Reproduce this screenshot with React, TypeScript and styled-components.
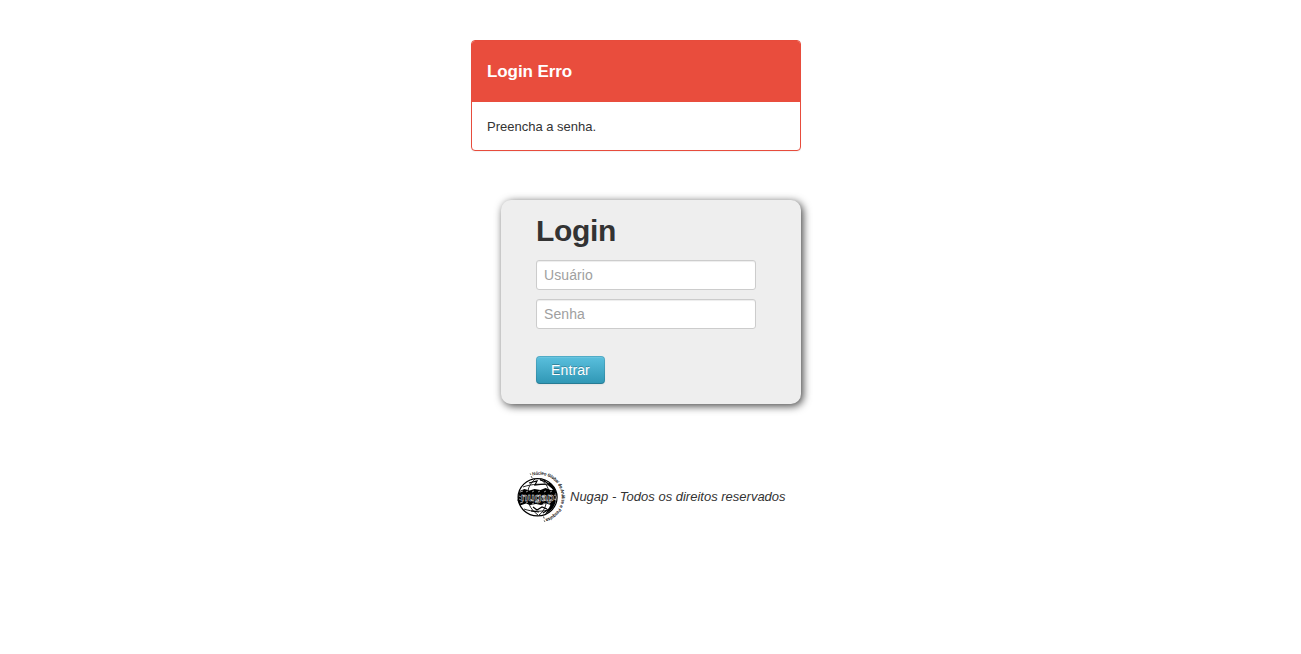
import React from "react";
import styled, { createGlobalStyle } from "styled-components";

const GlobalStyle = createGlobalStyle`
  * { box-sizing: border-box; }
  body {
    margin: 0;
    background: #fff;
    color: #333;
    font: 13px/18px "Liberation Sans", Arial, sans-serif;
  }
`;

const Page = styled.main`
  width: 360px;
  margin-left: 471px;
  padding-top: 40px;
`;

const Alert = styled.section`
  width: 330px;
  height: 111px;
  border: 1px solid #e74c3c;
  border-radius: 4px;
  background: #fff;
  overflow: hidden;
  box-shadow: 0 1px 1px rgba(0, 0, 0, 0.05);
`;

const AlertTitle = styled.h3`
  margin: 0;
  height: 61px;
  padding: 0 15px;
  background: #e94d3d;
  color: #fff;
  font-size: 17px;
  line-height: 62px;
  letter-spacing: -0.08px;
`;

const AlertBody = styled.p`
  margin: 0;
  padding: 16px 15px 14px;
`;

const LoginForm = styled.form`
  display: flex;
  flex-direction: column;
  align-items: flex-start;
  width: 300px;
  height: 204px;
  margin: 49px 0 0 30px;
  padding: 13px 35px 0;
  border-radius: 10px;
  background: #eee;
  box-shadow: 2px 2px 8px rgba(0, 0, 0, 0.75);
`;

const Heading = styled.h1`
  margin: 0 0 11px;
  font-size: 30px;
  line-height: 36px;
  letter-spacing: -0.35px;
`;

const Field = styled.input`
  width: 220px;
  height: 30px;
  margin: 0 0 9px;
  padding: 4px 7px;
  border: 1px solid #ccc;
  border-radius: 3px;
  background: #fff;
  box-shadow: inset 0 1px 1px rgba(0, 0, 0, 0.075);
  color: #555;
  font: 14px/20px "Liberation Sans", Arial, sans-serif;
  letter-spacing: 0.1px;
  &::placeholder { color: #a0a0a0; opacity: 1; }
`;

const Submit = styled.button`
  width: 69px;
  height: 28px;
  margin-top: 18px;
  padding: 0;
  border: 1px solid;
  border-color: rgba(0, 0, 0, 0.1) rgba(0, 0, 0, 0.1) rgba(0, 0, 0, 0.18);
  border-radius: 4px;
  background: #2f96b4 linear-gradient(#5bc0de, #2f96b4) border-box;
  box-shadow: inset 0 1px 0 rgba(255, 255, 255, 0.1), 0 1px 2px rgba(0, 0, 0, 0.05);
  color: #fff;
  font: 14px/20px "Liberation Sans", Arial, sans-serif;
  letter-spacing: 0.12px;
  text-shadow: 0 -1px 0 rgba(0, 0, 0, 0.25);
`;

const Footer = styled.footer`
  display: flex;
  align-items: center;
  gap: 4px;
  margin: 66px 0 0 44px;
  font-style: italic;
  white-space: nowrap;
`;

const Emblem = styled.svg`
  display: block;
  flex: none;
  width: 51px;
  height: 54px;
  overflow: visible;
  font-family: "Liberation Sans", Arial, sans-serif;
  font-style: normal;
`;

function GlobeLogo() {
  return (
    <Emblem viewBox="0 0 51 54" aria-label="Nugap">
      <defs>
        <path id="ring" d="M17.7 5.6 A22.4 22.4 0 0 1 30.7 49" />
      </defs>
      <g fill="none" stroke="#000">
        <ellipse cx="22.6" cy="27.3" rx="19.5" ry="18.6" strokeWidth="1.2" />
        <path d="M20 9C15 14 13 18 13 22M25 9c6 4 8 8 9 13M8 17c8-3 20-4 29-1M14 34c2 5 5 8 9 11M31 34c-1 5-4 9-7 11M9 39c8 3 19 3 27 0" strokeWidth=".85" />
        <path d="M25 10c6 1 11 5 14 10M29 10c3 4 7 7 10 9M14 13l8-2-2 4 10-1M18 37l4 3 5-3 5 2M28 43l9-6M16 41l8 1" strokeWidth="1.2" />
      </g>
      <path d="M4.5 21l5-2 5 1.5 5-1.5 6 1 5-2 5 2 4 0 1.5 6-1 7-4 2-5-1.5-5 1.5-5-1-6 1-4-1.5-6 2-2.5-5z" />
      <path d="M34 12c5 4 8 9 8 15-2-5-4-8-8-11zM41 30c-1 7-5 11-11 14 3-4 5-7 6-11z" />
      <path d="M5 22l3-1m3 1l2-1m4 1l2-1m4 1l2-1m4 1l2-1m4 1l2-1M5 33l3-1m3 1l2-1m4 2l2-1m9 1l2-1m4 0l2-1M4 26l2 1m33-2l2 1M4 29l2 1m33-1l2 1" fill="none" stroke="#fff" strokeWidth=".6" />
      <text x="6" y="30.6" fontSize="11.5" fontWeight="700" textLength="33" lengthAdjust="spacingAndGlyphs" fill="#000" stroke="#fff" strokeWidth=".45">nugap</text>
      <text fontSize="4.4" fill="#000" stroke="#000" strokeWidth=".12"><textPath href="#ring" textLength="71" lengthAdjust="spacingAndGlyphs">Núcleo Global de Análise e Pesquisa</textPath></text>
      <path d="M15.2 3.5l.7 1.3M16.2 6.2l1 2M28.5 46.5l.7 2M29.2 50.4l.7 1.5" fill="none" stroke="#000" strokeWidth=".7" />
    </Emblem>
  );
}

export default function App() {
  return (
    <>
      <GlobalStyle />
      <Page>
        <Alert role="alert">
          <AlertTitle>Login Erro</AlertTitle>
          <AlertBody>Preencha a senha.</AlertBody>
        </Alert>
        <LoginForm onSubmit={(event) => event.preventDefault()}>
          <Heading>Login</Heading>
          <Field type="text" placeholder="Usuário" />
          <Field type="password" placeholder="Senha" />
          <Submit type="submit">Entrar</Submit>
        </LoginForm>
        <Footer>
          <GlobeLogo />
          <span>Nugap - Todos os direitos reservados</span>
        </Footer>
      </Page>
    </>
  );
}
